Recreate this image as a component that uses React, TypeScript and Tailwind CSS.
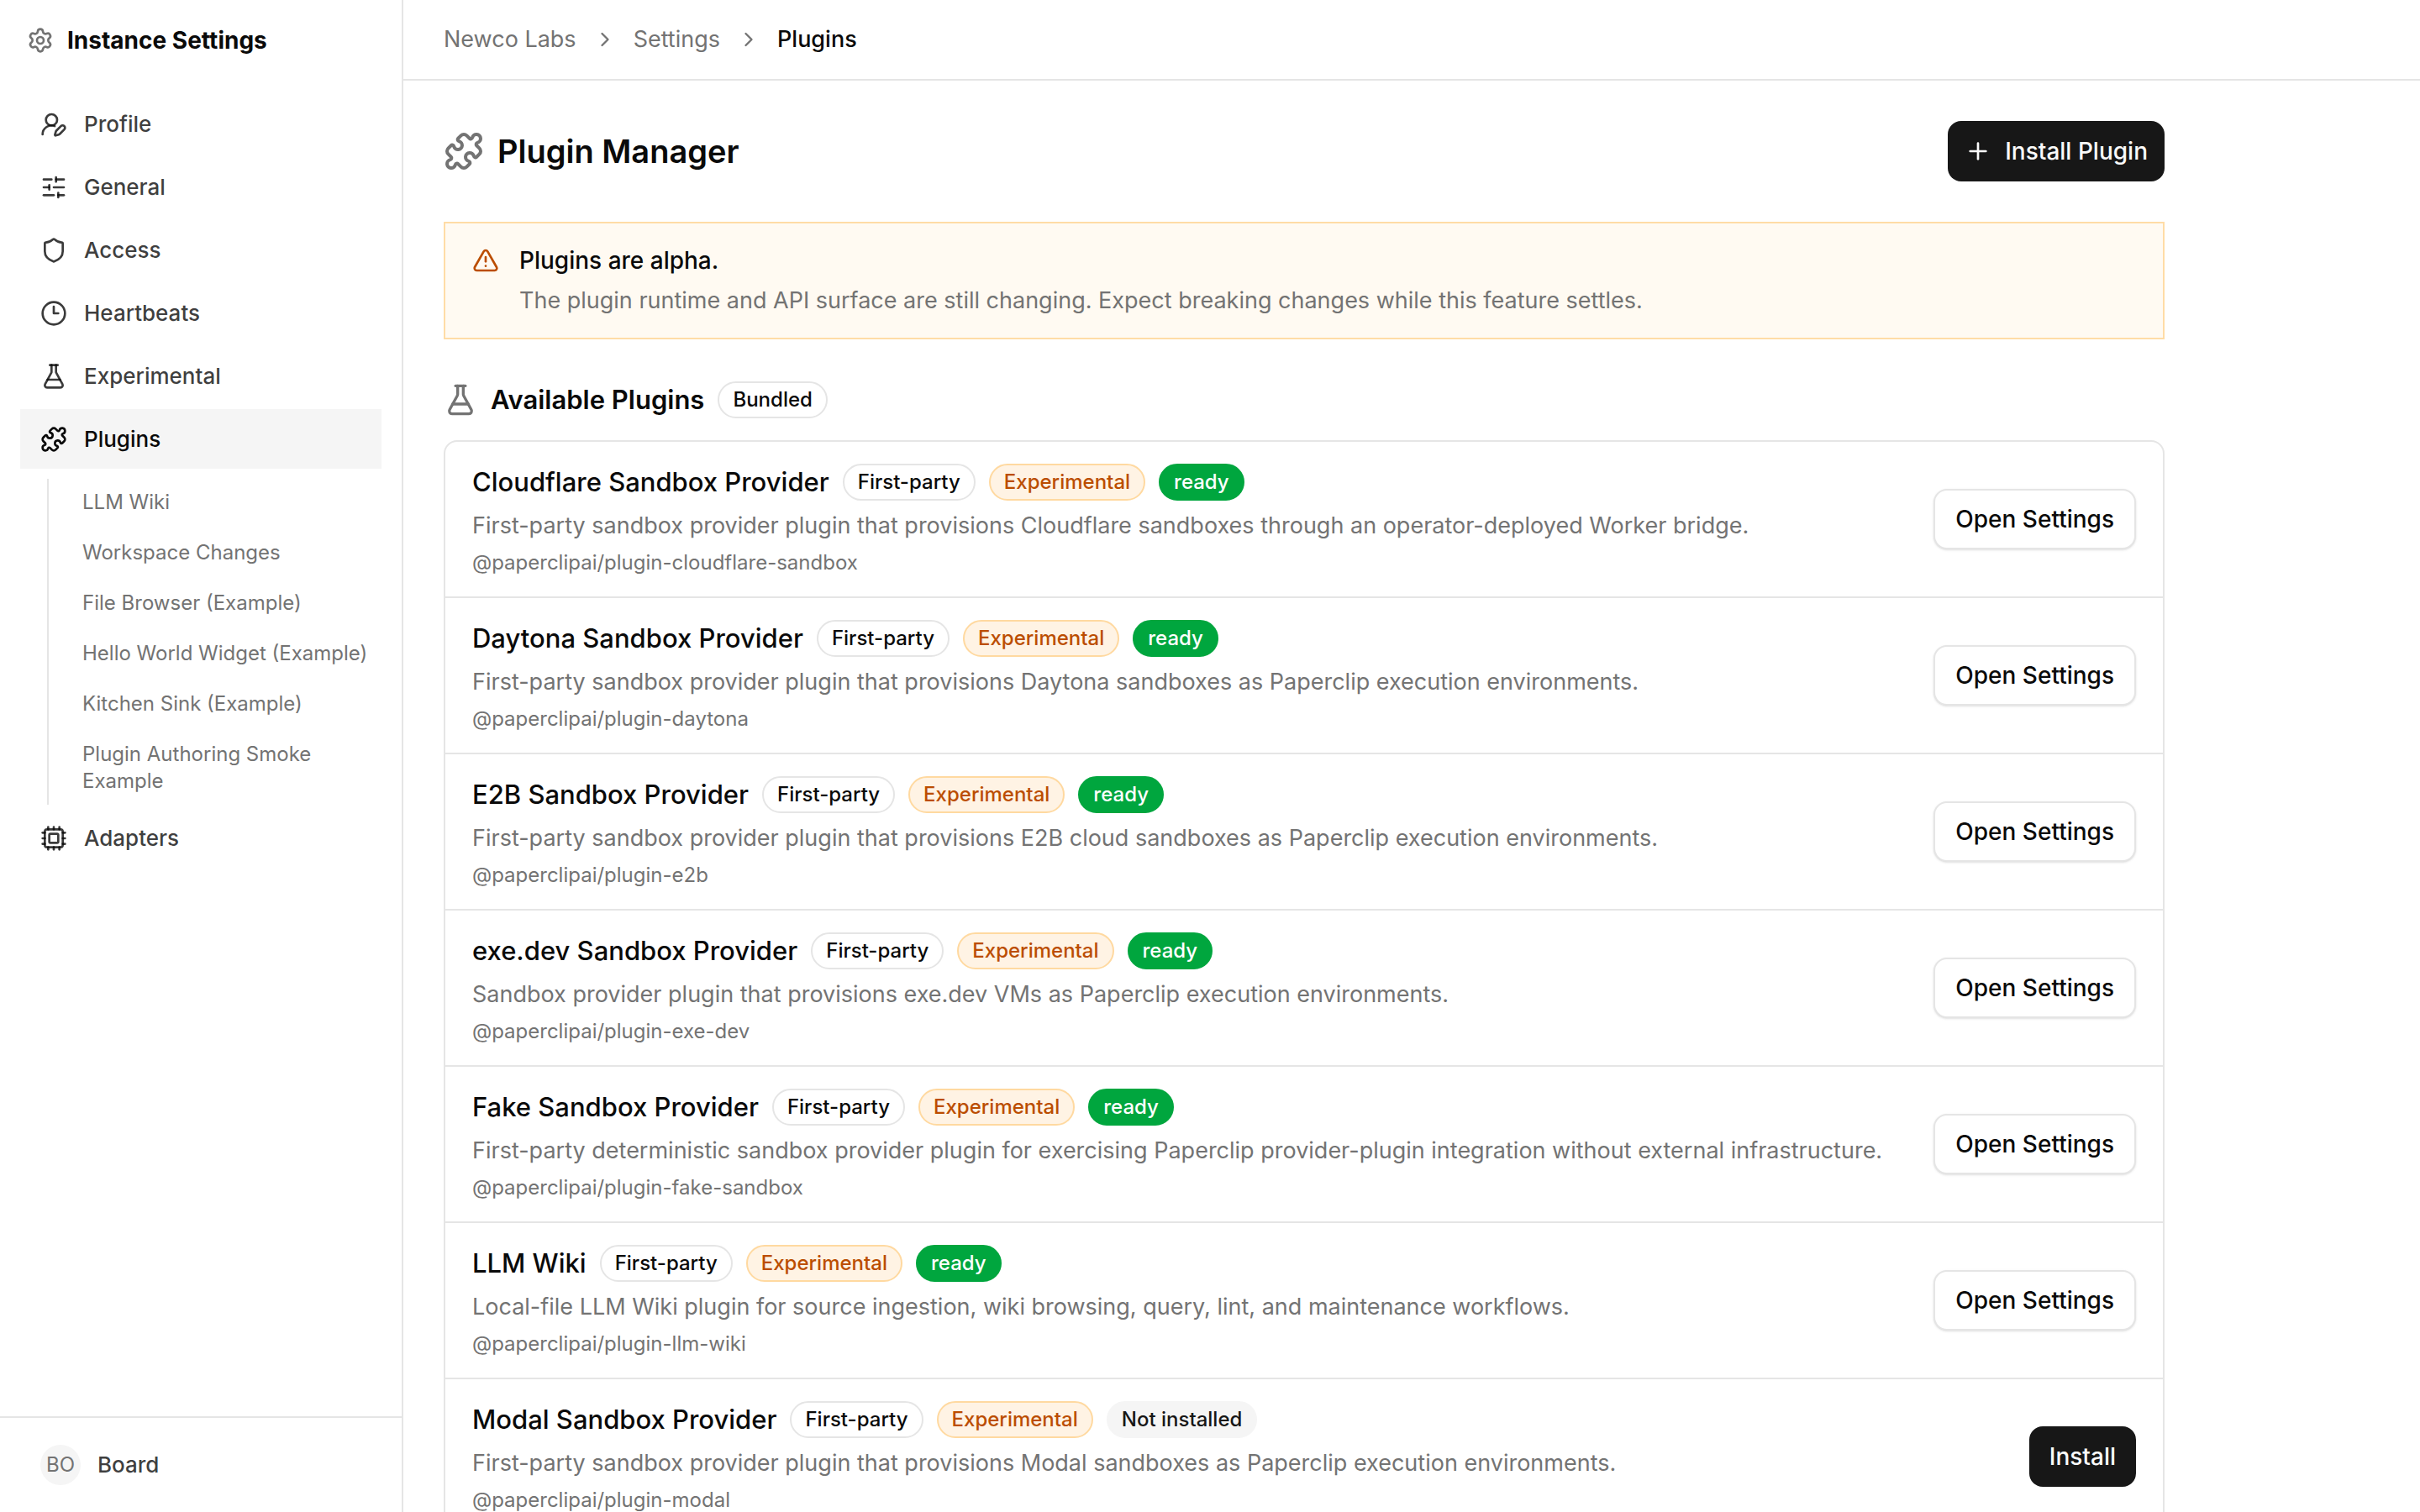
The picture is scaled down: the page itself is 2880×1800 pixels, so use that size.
import type { ComponentType, ReactNode } from "react";
import {
  ChevronRight,
  Clock3,
  Cpu,
  FlaskConical,
  Plus,
  Puzzle,
  Settings,
  Shield,
  SlidersHorizontal,
  TriangleAlert,
  UserRoundPen,
} from "lucide-react";

type Icon = ComponentType<{ className?: string }>;

const primaryNav: { label: string; icon: Icon; active?: boolean }[] = [
  { label: "Profile", icon: UserRoundPen },
  { label: "General", icon: SlidersHorizontal },
  { label: "Access", icon: Shield },
  { label: "Heartbeats", icon: Clock3 },
  { label: "Experimental", icon: FlaskConical },
  { label: "Plugins", icon: Puzzle, active: true },
];

const installedPlugins = [
  "LLM Wiki",
  "Workspace Changes",
  "File Browser (Example)",
  "Hello World Widget (Example)",
  "Kitchen Sink (Example)",
  "Plugin Authoring Smoke Example",
];

const plugins = [
  {
    name: "Cloudflare Sandbox Provider",
    description:
      "First-party sandbox provider plugin that provisions Cloudflare sandboxes through an operator-deployed Worker bridge.",
    pkg: "@paperclipai/plugin-cloudflare-sandbox",
    installed: true,
  },
  {
    name: "Daytona Sandbox Provider",
    description:
      "First-party sandbox provider plugin that provisions Daytona sandboxes as Paperclip execution environments.",
    pkg: "@paperclipai/plugin-daytona",
    installed: true,
  },
  {
    name: "E2B Sandbox Provider",
    description:
      "First-party sandbox provider plugin that provisions E2B cloud sandboxes as Paperclip execution environments.",
    pkg: "@paperclipai/plugin-e2b",
    installed: true,
  },
  {
    name: "exe.dev Sandbox Provider",
    description: "Sandbox provider plugin that provisions exe.dev VMs as Paperclip execution environments.",
    pkg: "@paperclipai/plugin-exe-dev",
    installed: true,
  },
  {
    name: "Fake Sandbox Provider",
    description:
      "First-party deterministic sandbox provider plugin for exercising Paperclip provider-plugin integration without external infrastructure.",
    pkg: "@paperclipai/plugin-fake-sandbox",
    installed: true,
  },
  {
    name: "LLM Wiki",
    description: "Local-file LLM Wiki plugin for source ingestion, wiki browsing, query, lint, and maintenance workflows.",
    pkg: "@paperclipai/plugin-llm-wiki",
    installed: true,
  },
  {
    name: "Modal Sandbox Provider",
    description:
      "First-party sandbox provider plugin that provisions Modal sandboxes as Paperclip execution environments.",
    pkg: "@paperclipai/plugin-modal",
    installed: false,
  },
];

const badgeTones = {
  outline: "border-neutral-200 text-neutral-950",
  experimental: "border-[#ffd9a0] bg-[#fff3e4] text-amber-700",
  ready: "border-green-600 bg-green-600 text-white",
  secondary: "border-neutral-100 bg-neutral-100 text-neutral-900",
};

function Badge({ tone, children }: { tone: keyof typeof badgeTones; children: ReactNode }) {
  return (
    <span
      className={`inline-flex shrink-0 items-center rounded-full border-2 px-4 py-1 text-[24px] leading-8 font-medium whitespace-nowrap ${badgeTones[tone]}`}
    >
      {children}
    </span>
  );
}

function NavItem({ label, icon: IconGlyph, active }: { label: string; icon: Icon; active?: boolean }) {
  return (
    <a
      href="#"
      aria-current={active ? "page" : undefined}
      className={`flex items-center gap-5 px-6 py-4 text-[26px] leading-[39px] font-medium ${
        active ? "bg-neutral-100 text-neutral-950" : "text-neutral-950/80"
      }`}
    >
      <IconGlyph className="size-8 shrink-0" />
      <span>{label}</span>
    </a>
  );
}

function Sidebar() {
  return (
    <aside className="flex w-[480px] shrink-0 flex-col border-r-2 border-neutral-200">
      <div className="flex h-24 shrink-0 items-center gap-4 px-8">
        <Settings className="size-8 shrink-0 text-neutral-500" />
        <span className="text-[28px] leading-10 font-bold whitespace-nowrap">Instance Settings</span>
      </div>
      <nav aria-label="Instance settings" className="flex min-h-0 flex-1 flex-col gap-1 px-6 py-4">
        {primaryNav.map((item) => (
          <NavItem key={item.label} {...item} />
        ))}
        <ul className="mt-2 ml-8 flex flex-col gap-1 border-l-2 border-neutral-200 pl-6">
          {installedPlugins.map((name) => (
            <li key={name}>
              <a href="#" className="block px-4 py-3 text-[24px] leading-8 text-neutral-500">
                {name}
              </a>
            </li>
          ))}
        </ul>
        <NavItem label="Adapters" icon={Cpu} />
      </nav>
      <div className="shrink-0 border-t-2 border-neutral-200 px-6 py-6">
        <button type="button" className="flex h-16 w-full items-center gap-5 px-6 text-left">
          <span className="flex size-12 shrink-0 items-center justify-center rounded-full bg-neutral-100 text-[24px] leading-8 text-neutral-500">
            BO
          </span>
          <span className="text-[26px] leading-10 font-medium text-neutral-950/80">Board</span>
        </button>
      </div>
    </aside>
  );
}

function PluginRow({ plugin }: { plugin: (typeof plugins)[number] }) {
  return (
    <li className="flex items-center gap-6 px-8 py-6">
      <div className="flex min-w-0 flex-1 flex-col gap-2">
        <div className="flex items-center gap-4">
          <span className="text-[31px] leading-[48px] font-medium whitespace-nowrap">{plugin.name}</span>
          <Badge tone="outline">First-party</Badge>
          <Badge tone="experimental">Experimental</Badge>
          {plugin.installed ? <Badge tone="ready">ready</Badge> : <Badge tone="secondary">Not installed</Badge>}
        </div>
        <p className="text-[27px] leading-10 text-neutral-500">{plugin.description}</p>
        <p className="text-[24px] leading-8 text-neutral-500">{plugin.pkg}</p>
      </div>
      {plugin.installed ? (
        <button
          type="button"
          className="h-[72px] shrink-0 rounded-2xl border-2 border-neutral-200 bg-white px-6 text-[28px] leading-10 font-medium shadow-sm"
        >
          Open Settings
        </button>
      ) : (
        <button
          type="button"
          className="h-[72px] shrink-0 rounded-2xl bg-neutral-900 px-6 text-[28px] leading-10 font-medium text-neutral-50"
        >
          Install
        </button>
      )}
    </li>
  );
}

export default function App() {
  return (
    <div className="flex h-screen overflow-hidden bg-white font-['Inter',sans-serif] text-neutral-950 antialiased">
      <Sidebar />
      <div className="flex min-w-0 flex-1 flex-col">
        <header className="flex h-24 shrink-0 items-center border-b-2 border-neutral-200 px-12">
          <nav aria-label="Breadcrumb">
            <ol className="flex items-center gap-5 text-[27px] leading-10">
              <li>
                <a href="#" className="text-neutral-500">
                  Newco Labs
                </a>
              </li>
              <li aria-hidden="true">
                <ChevronRight className="size-7 text-neutral-500" />
              </li>
              <li>
                <a href="#" className="text-neutral-500">
                  Settings
                </a>
              </li>
              <li aria-hidden="true">
                <ChevronRight className="size-7 text-neutral-500" />
              </li>
              <li aria-current="page" className="font-medium">
                Plugins
              </li>
            </ol>
          </nav>
        </header>
        <main className="min-h-0 flex-1 overflow-hidden p-12">
          <div className="flex max-w-[2048px] flex-col">
            <div className="flex items-center justify-between">
              <div className="flex items-center gap-4">
                <Puzzle className="size-12 shrink-0 text-neutral-500" />
                <h1 className="text-[38px] leading-[56px] font-semibold">Plugin Manager</h1>
              </div>
              <button
                type="button"
                className="flex h-[72px] items-center gap-4 rounded-2xl bg-neutral-900 px-5 text-[28px] leading-10 font-medium text-neutral-50"
              >
                <Plus className="size-8" />
                Install Plugin
              </button>
            </div>

            <div role="note" className="mt-12 flex gap-6 border-2 border-[#ffdca6] bg-[#fffaf2] px-8 py-6">
              <TriangleAlert className="mt-1 size-8 shrink-0 text-amber-700" />
              <div className="flex flex-col gap-2 leading-10">
                <p className="text-[28px] leading-10 font-medium">Plugins are alpha.</p>
                <p className="text-[27px] leading-10 text-neutral-500">
                  The plugin runtime and API surface are still changing. Expect breaking changes while this feature
                  settles.
                </p>
              </div>
            </div>

            <section className="mt-12">
              <div className="flex items-center gap-4">
                <FlaskConical className="size-10 shrink-0 text-neutral-500" />
                <h2 className="text-[31px] leading-[48px] font-semibold">Available Plugins</h2>
                <Badge tone="outline">Bundled</Badge>
              </div>
              <ul className="mt-6 divide-y-2 divide-neutral-200 rounded-2xl border-2 border-neutral-200">
                {plugins.map((plugin) => (
                  <PluginRow key={plugin.pkg} plugin={plugin} />
                ))}
              </ul>
            </section>
          </div>
        </main>
      </div>
    </div>
  );
}
